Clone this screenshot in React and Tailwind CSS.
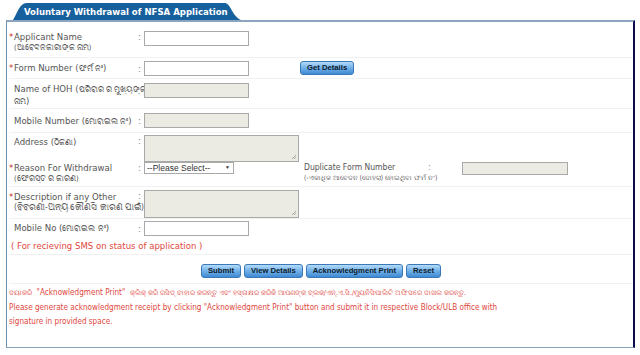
const FONT = '"DejaVu Sans Condensed", "DejaVu Sans", Verdana, sans-serif';
const BTNFONT = '"Liberation Sans", Arial, sans-serif';

function O({ children, size = "text-[8px]" }) {
  return <span className={size}>{children}</span>;
}

function Label({ req, children, sub, subSize = "text-[7.5px]" }) {
  return (
    <div className="w-[129px] shrink-0 leading-[11px] whitespace-nowrap">
      <div>
        {req ? <span className="text-[#c8302c] inline-block w-[5px]">*</span> : <span className="inline-block w-[5px]" />}
        {children}
      </div>
      {sub && <div className={`pl-[5px] ${subSize} leading-[11px]`}>{sub}</div>}
    </div>
  );
}

function Colon() {
  return <div className="w-[6px] shrink-0 text-[#888] leading-[11px]">:</div>;
}

function Input({ gray, w = "w-[105px]", h = "h-[15px]" }) {
  return <div className={`${w} ${h} shrink-0 border border-[#a9a9a9] ${gray ? "bg-[#ebebe4]" : "bg-white"}`} />;
}

function Area({ h = "h-[28px]" }) {
  return (
    <div className={`relative w-[155px] ${h} shrink-0 border border-[#a9a9a9] bg-[#ebebe4]`}>
      <svg className="absolute right-[1px] bottom-[1px]" width="6" height="6" viewBox="0 0 6 6">
        <path d="M1 5 L5 1 M3 5 L5 3" stroke="#999" strokeWidth="0.8" />
      </svg>
    </div>
  );
}

function Btn({ children }) {
  return (
    <div
      className="h-[14px] px-[6px] rounded-[3px] border border-[#3a78b8] bg-gradient-to-b from-[#b3daf9] via-[#6fb0e8] to-[#3f8ad3] text-[7.7px] font-bold text-[#0d1a2a] flex items-center whitespace-nowrap"
      style={{ fontFamily: BTNFONT }}
    >
      {children}
    </div>
  );
}

export default function App() {
  return (
    <div className="w-[640px] h-[355px] bg-white text-[9.5px] text-[#555] overflow-hidden" style={{ fontFamily: FONT }}>
      <div className="pt-[3px] pl-[13px]">
        <div className="relative h-[17px] w-[228px]">
          <svg className="absolute inset-0" width="228" height="17" viewBox="0 0 228 17">
            <path d="M0 17 C4 11 6 1 13 0 L212 0 C218 1 219 13 228 17 Z" fill="#17609e" />
          </svg>
          <div className="relative pl-[11px] pt-[2px] text-white font-bold text-[9.5px] leading-[13px] whitespace-nowrap">
            Voluntary Withdrawal of NFSA Application
          </div>
        </div>
      </div>
      <div className="ml-[6px] w-[629px] h-[328px] border-t-2 border-t-[#8ba5be] border-l border-l-[#6b8fb3] border-r-2 border-r-[#0b0b4d] border-b border-b-[#8ba5be] pl-[2px]">
        {/* Applicant */}
        <div className="flex items-start h-[36px] pt-[9px] border-b border-[#f1f1f1]">
          <Label req sub="(ଆବେଦନକାରୀଙ୍କ ନାମ)">Applicant Name</Label>
          <Colon />
          <Input />
        </div>
        {/* Form Number */}
        <div className="flex items-center h-[21px] border-b border-[#f1f1f1]">
          <Label req>Form Number (<O>ଫର୍ମ ନଂ</O>)</Label>
          <Colon />
          <Input />
          <div className="ml-[51px]"><Btn>Get Details</Btn></div>
        </div>
        {/* HOH */}
        <div className="flex items-start h-[30px] pt-[4px] border-b border-[#f1f1f1]">
          <div className="w-[135px] shrink-0 leading-[11px] whitespace-nowrap">
            <div className="pl-[5px]">Name of HOH (<O size="text-[7.5px]">ପରିବାର ର ମୁଖ୍ୟଙ୍କ</O><span className="text-[#888]">:</span></div>
            <div className="pl-[5px]"><O size="text-[7.5px]">ନାମ</O>)</div>
          </div>
          <Input gray />
        </div>
        {/* Mobile Number */}
        <div className="flex items-center h-[24px] border-b border-[#f1f1f1]">
          <Label>Mobile Number (<O size="text-[7.5px]">ମୋବାଇଲ ନଂ</O>)</Label>
          <Colon />
          <Input gray />
        </div>
        {/* Address */}
        <div className="flex items-start h-[29px] pt-[2px]">
          <Label><span className="inline-block pt-[1px]">Address (<O>ଠିକଣା</O>)</span></Label>
          <Colon />
          <Area h="h-[27px]" />
        </div>
        {/* Reason */}
        <div className="flex items-start h-[25px] border-b border-[#f1f1f1]">
          <Label req sub="(ଫେରସ୍ତ ର କାରଣ)">Reason For Withdrawal</Label>
          <Colon />
          <div
            className="w-[90px] h-[12px] shrink-0 border border-[#a9a9a9] bg-white flex items-center justify-between pl-[2px] pr-[3px] text-[8.5px] text-[#333]"
            style={{ fontFamily: BTNFONT }}
          >
            <span>--Please Select--</span>
            <span className="text-[5px]">▼</span>
          </div>
          <div className="ml-[70px] w-[158px] shrink-0 leading-[11px] text-[8.5px] whitespace-nowrap">
            <div>Duplicate Form Number<span className="ml-[33px] text-[#888]">:</span></div>
            <div className="text-[6.8px]">(-ଏକାଧିକ ଆବେଦନ (ଦୋହରା) ହୋଇଥିବା ଫର୍ମ ନଂ)</div>
          </div>
          <Input gray w="w-[106px]" h="h-[13px]" />
        </div>
        {/* Description */}
        <div className="flex items-start h-[32px] pt-[3px] border-b border-[#f1f1f1]">
          <Label req sub="(ବିବରଣୀ-ଅନ୍ୟ କୌଣସି କାରଣ ପାଇଁ)" subSize="text-[8.5px]"><span className="inline-block pt-[1px]">Description if any Other</span></Label>
          <Colon />
          <Area h="h-[28px]" />
        </div>
        {/* Mobile No */}
        <div className="flex items-center h-[18px]">
          <Label>Mobile No (<O>ମୋବାଇଲ ନଂ</O>)</Label>
          <Colon />
          <Input />
        </div>
        {/* SMS note */}
        <div className="h-[18px] pt-[3px] pl-[2px] leading-[11px] text-[#e0473d] border-b border-[#f1f1f1]">
          ( For recieving SMS on status of application )
        </div>
        {/* Buttons */}
        <div className="flex justify-center gap-[3px] h-[29px] pt-[9px] border-b border-[#f1f1f1]">
          <Btn>Submit</Btn>
          <Btn>View Details</Btn>
          <Btn>Acknowledgment Print</Btn>
          <Btn>Reset</Btn>
        </div>
        {/* Notes */}
        <div className="pt-[1px] text-[#e0473d] leading-[14px] text-[8.1px]">
          <div className="whitespace-nowrap">
            <O size="text-[7px]">ଦୟାକରି</O>&nbsp; "Acknowledgment Print" &nbsp;<O size="text-[7px]">କ୍ଲିକ୍ କରି ରସିଦ୍ ବାହାର କରନ୍ତୁ ଏବଂ ହସ୍ତାକ୍ଷର କରିକି ଆପଣଙ୍କ ବ୍ଲକ/ଏନ୍.ଏ.ସି./ମ୍ୟୁନିସିପାଲିଟି ଅଫିସରେ ଦାଖଲ କରନ୍ତୁ.</O>
          </div>
          <div className="whitespace-nowrap">
            Please generate acknowledgment receipt by clicking "Acknowledgment Print" button and submit it in respective Block/ULB office with
          </div>
          <div className="whitespace-nowrap">signature in provided space.</div>
        </div>
      </div>
    </div>
  );
}
